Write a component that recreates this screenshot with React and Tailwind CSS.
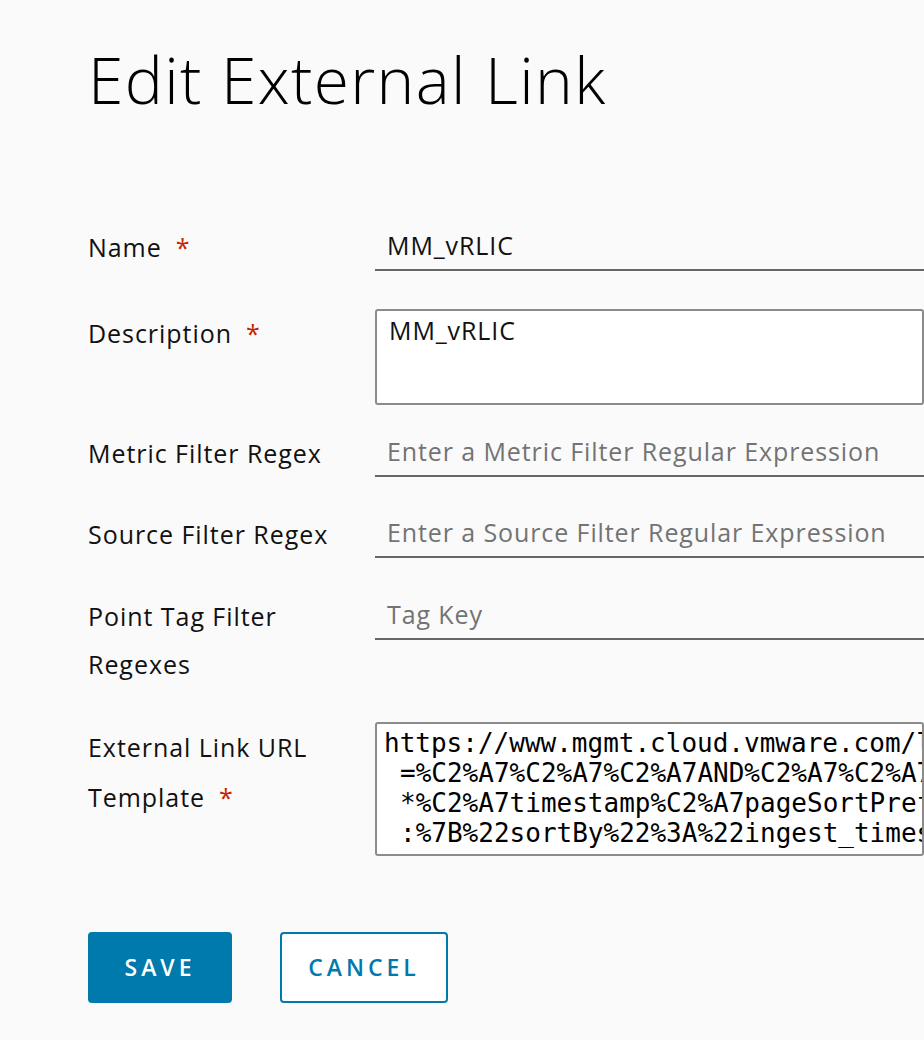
import React from "react";

const sans = { fontFamily: '"Open Sans", "Liberation Sans", sans-serif' };

const Required = () => <span className="ml-[14px] text-[#c92100]">*</span>;

const Label = ({ children, required }) => (
    <div className="w-[287px] shrink-0 text-[25px] leading-[48px] tracking-[0.95px] text-[#111]">
        {children}
        {required && <Required />}
    </div>
);

const LineInput = ({ value, placeholder }) => (
    <div className="h-[48px] w-[700px] border-b-2 border-[#666] flex items-center pl-[12px] text-[25px] tracking-[0.9px]">
        {value ? (
            <span className="text-[#111]">{value}</span>
        ) : (
            <span className="text-[#737373]">{placeholder}</span>
        )}
    </div>
);

const urlLines = [
    "https://www.mgmt.cloud.vmware.com/li/query/stream?query",
    "=%C2%A7%C2%A7%C2%A7AND%C2%A7%C2%A7%C2%A7%C2%A7",
    "*%C2%A7timestamp%C2%A7pageSortPreference",
    ":%7B%22sortBy%22%3A%22ingest_timestamp%22",
];

export default function App() {
    return (
        <div className="min-h-[1040px] w-full overflow-hidden bg-[#fafafa]" style={sans}>
            <div className="pl-[88px] pt-[38px]">
                {/* Title */}
                <h1 className="text-[64px] leading-[84px] font-light text-black tracking-[1.4px]">
                    Edit External Link
                </h1>

                {/* Form */}
                <div className="mt-[101px] flex flex-col">
                    <div className="flex items-start">
                        <Label required>Name</Label>
                        <LineInput value="MM_vRLIC" />
                    </div>

                    <div className="mt-[38px] flex items-start">
                        <Label required>Description</Label>
                        <div className="h-[96px] w-[700px] rounded-[3px] border-2 border-[#8c8c8c] bg-white pl-[12px] pt-[2px] text-[25px] leading-[34px] tracking-[0.9px] text-[#111]">
                            MM_vRLIC
                        </div>
                    </div>

                    <div className="mt-[24px] flex items-start">
                        <Label>Metric Filter Regex</Label>
                        <LineInput placeholder="Enter a Metric Filter Regular Expression" />
                    </div>

                    <div className="mt-[33px] flex items-start">
                        <Label>Source Filter Regex</Label>
                        <LineInput placeholder="Enter a Source Filter Regular Expression" />
                    </div>

                    <div className="mt-[34px] flex items-start">
                        <Label>
                            Point Tag Filter
                            <br />
                            Regexes
                        </Label>
                        <LineInput placeholder="Tag Key" />
                    </div>

                    <div className="mt-[34px] flex items-start">
                        <div className="w-[287px] shrink-0 text-[25px] leading-[50px] tracking-[0.95px] text-[#111]">
                            External Link URL
                            <br />
                            Template
                            <Required />
                        </div>
                        <div
                            className="h-[134px] w-[700px] overflow-hidden rounded-[3px] border-2 border-[#8c8c8c] bg-white pl-[7px] pt-[4px] text-[26px] leading-[30px] text-black"
                            style={{ fontFamily: '"DejaVu Sans Mono", "Liberation Mono", monospace' }}
                        >
                            {urlLines.map((line, i) => (
                                <div key={line} className={i === 0 ? "whitespace-pre" : "whitespace-pre pl-[16px]"}>
                                    {line}
                                </div>
                            ))}
                        </div>
                    </div>
                </div>

                {/* Actions */}
                <div className="mt-[76px] flex gap-[48px]">
                    <button className="h-[71px] w-[144px] rounded-[4px] bg-[#0079ad] text-[23px] font-semibold tracking-[4px] text-white">
                        SAVE
                    </button>
                    <button className="h-[71px] w-[168px] rounded-[4px] border-2 border-[#0079ad] bg-white text-[23px] font-semibold tracking-[4px] text-[#0079ad]">
                        CANCEL
                    </button>
                </div>
            </div>
        </div>
    );
}
